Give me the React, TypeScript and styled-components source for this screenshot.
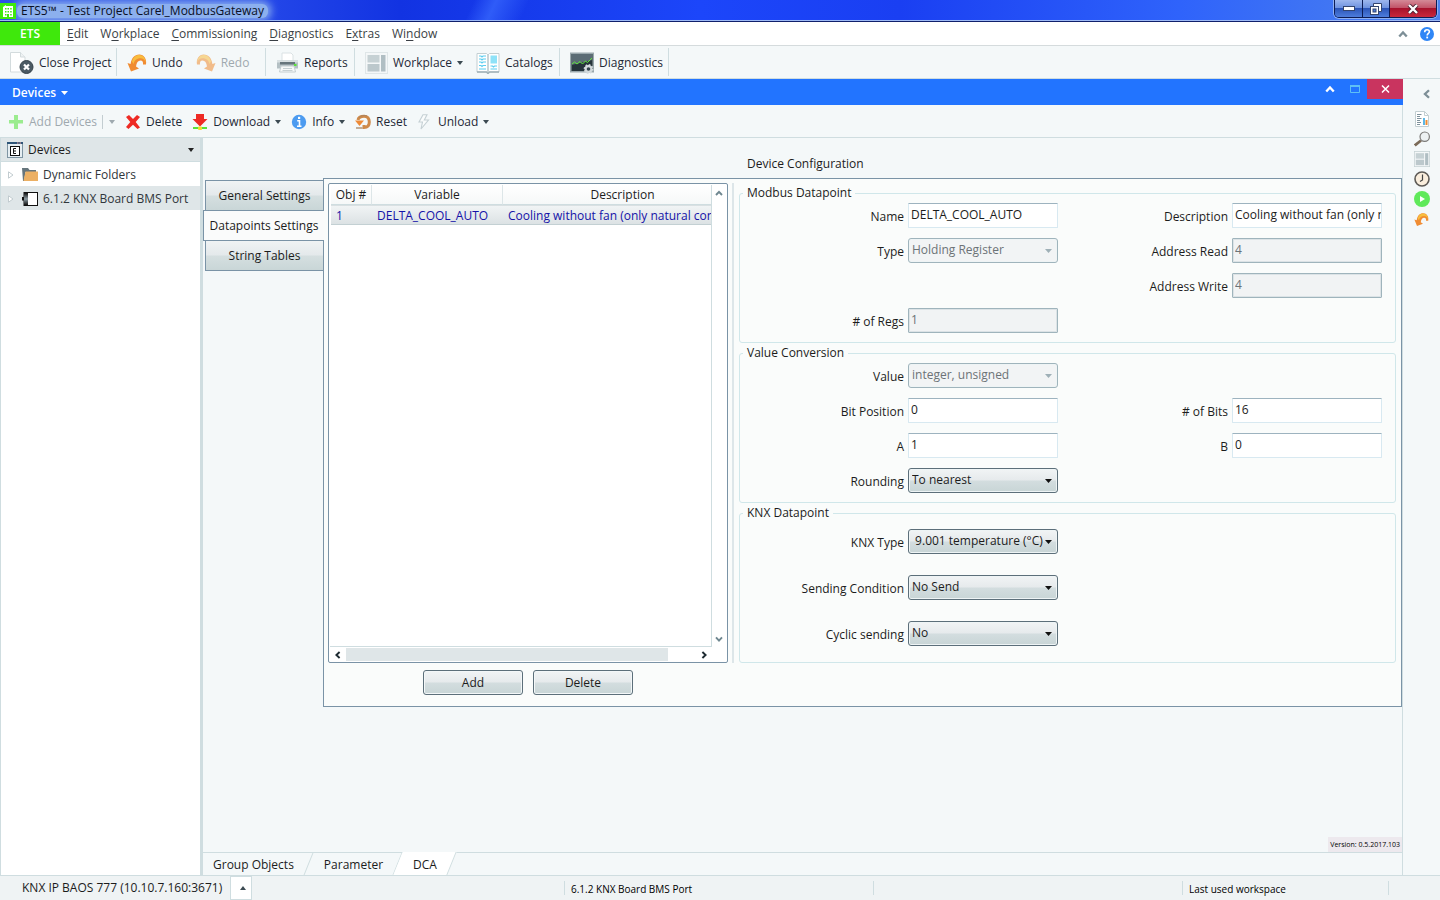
import React from "react";
import styled, { createGlobalStyle, css } from "styled-components";

const line = "#cfdde0";
const frame = "#7a93a6";

const GlobalStyle = createGlobalStyle`
  *, *::before, *::after { box-sizing: border-box; }
  body { margin: 0; background: #f4f8f9; }
  body, button, input, select, table {
    font-family: "Open Sans", "Noto Sans", sans-serif;
    font-size: 12px;
    line-height: 16px;
    color: #1c1c1c;
  }
  button { border: 0; background: none; padding: 0; margin: 0; }
  svg { display: block; flex: none; }
`;

const Page = styled.div`
  display: flex;
  flex-direction: column;
  min-height: 100vh;
`;

/* ---------- window title ---------- */

const TitleBar = styled.header`
  display: flex;
  align-items: center;
  height: 22px;
  padding-right: 3px;
  overflow: hidden;
  border-bottom: 1px solid #10206c;
  box-shadow: inset 0 -1px 0 #9db9f5;
  background:
    linear-gradient(115deg, transparent 430px, #2f5cf8 450px, transparent 480px),
    linear-gradient(90deg, #2c50e6 0, #2346e8 270px, #1233e2 400px, #1c46fa 700px, #1a3ff2 900px, #2f63fb 1180px, #4d83ee 100%);
`;

const AppMark = styled.span`
  position: relative;
  z-index: 1;
`;

const TitleText = styled.h1`
  margin: 0 0 0 1px;
  padding: 0 4px;
  font-size: 12px;
  line-height: 14px;
  font-weight: 400;
  color: #0a0f24;
  background: #8cb0ee;
  border-radius: 6px;
  box-shadow: 0 0 8px 3px #8cb0ee;
`;

const WindowButtons = styled.div`
  display: flex;
  align-self: flex-start;
  height: 18px;
  border: 1px solid #0c1c55;
  border-top: 0;
  border-radius: 0 0 5px 5px;
  overflow: hidden;
  box-shadow: 0 0 0 1px #8fb0f2;
`;

const WindowButton = styled.button<{ $close?: boolean }>`
  display: flex;
  align-items: center;
  justify-content: center;
  width: ${(p) => (p.$close ? 47 : 27)}px;
  border-left: 1px solid #0c1c55;
  background: ${(p) =>
    p.$close
      ? "linear-gradient(#d48a97 0, #c25468 45%, #a8122c 50%, #c8283c 100%)"
      : "linear-gradient(#9db7ee 0, #6f93e0 45%, #2c55b8 50%, #4d7ddc 100%)"};
  &:first-child { border-left: 0; }
`;

/* ---------- menu ---------- */

const MenuBar = styled.nav`
  display: flex;
  align-items: center;
  height: 24px;
  padding-right: 5px;
  background: #fff;
  border-bottom: 1px solid #d5dbdd;
`;

const EtsButton = styled.button`
  align-self: stretch;
  width: 60px;
  margin-right: 7px;
  background: #3fe80c;
  color: #fff;
  font-weight: 600;
`;

const MenuItem = styled.button`
  margin-right: 12px;
  color: #3a3f45;
  u { text-underline-offset: 2px; }
`;

const Spacer = styled.div`
  flex: 1;
`;

const IconButton = styled.button`
  display: flex;
  align-items: center;
  justify-content: center;
  width: 16px;
  height: 16px;
  margin-left: 8px;
`;

/* ---------- toolbars ---------- */

const MainToolbar = styled.div`
  display: flex;
  align-items: center;
  height: 33px;
  border-bottom: 1px solid ${line};
`;

const ToolGroup = styled.div<{ $width: number }>`
  display: flex;
  align-items: center;
  gap: 13px;
  min-width: ${(p) => p.$width}px;
  height: 28px;
  padding-left: 10px;
  border-right: 1px solid ${line};
`;

const ToolButton = styled.button<{ $faded?: boolean }>`
  display: flex;
  align-items: center;
  gap: 5px;
  padding-top: 1px;
  white-space: nowrap;
  color: ${(p) => (p.$faded ? "#9fa9af" : "#1f2937")};
`;

const PaneTitle = styled.div`
  display: flex;
  align-items: flex-start;
  height: 26px;
  padding-left: 12px;
  background: #2274ff;
`;

const PaneName = styled.button`
  display: flex;
  align-items: center;
  align-self: center;
  gap: 5px;
  padding-top: 1px;
  color: #fff;
  font-weight: 600;
`;

const PaneButton = styled.button<{ $close?: boolean }>`
  display: flex;
  align-items: center;
  justify-content: center;
  width: ${(p) => (p.$close ? 36 : 25)}px;
  height: 20px;
  background: ${(p) => (p.$close ? "#c9345f" : "none")};
`;

const DeviceToolbar = styled.div`
  display: flex;
  align-items: center;
  gap: 10px;
  height: 33px;
  padding-left: 8px;
  border-bottom: 1px solid ${line};
`;

const Split = styled.span`
  display: flex;
  align-items: center;
  height: 14px;
  padding-left: 6px;
  border-left: 1px solid #c3cdd1;
`;

/* ---------- frame of the work area ---------- */

const Body = styled.div`
  display: flex;
  flex: 1;
`;

const Workspace = styled.div`
  display: flex;
  flex: 1;
  flex-direction: column;
  min-width: 0;
`;

const WorkFrame = styled.div`
  display: flex;
  flex: 1;
  flex-direction: column;
  border-right: 1px solid ${line};
`;

const Columns = styled.div`
  display: flex;
  flex: 1;
`;

const Rail = styled.aside`
  display: flex;
  flex-direction: column;
  align-items: center;
  gap: 4px;
  width: 37px;
  padding-top: 7px;
`;

const RailButton = styled.button<{ $toggle?: boolean }>`
  display: flex;
  align-items: center;
  justify-content: center;
  width: 16px;
  height: 16px;
  ${(p) => p.$toggle && css`align-self: flex-end; margin: 0 5px 5px 0;`}
`;

/* ---------- device tree ---------- */

const Sidebar = styled.aside`
  flex: none;
  width: 203px;
  background: #fff;
  border-left: 1px solid ${line};
  border-right: 3px solid ${line};
`;

const TreeHeader = styled.div`
  display: flex;
  align-items: center;
  gap: 5px;
  height: 24px;
  padding: 1px 6px 0;
  background: #dfe6e8;
  border-bottom: 1px solid ${line};
`;

const Tree = styled.ul`
  margin: 0;
  padding: 0;
  list-style: none;
`;

const TreeItem = styled.li<{ $selected?: boolean }>`
  display: flex;
  align-items: center;
  height: 24px;
  padding: 1px 0 0 7px;
  gap: 5px;
  color: #30363b;
  background: ${(p) => (p.$selected ? "#dfe6e8" : "#fff")};
  svg:first-child { margin-right: 3px; }
`;

/* ---------- device configuration ---------- */

const Content = styled.main`
  display: flex;
  flex: 1;
  flex-direction: column;
  min-width: 0;
`;

const Config = styled.section`
  display: grid;
  grid-template-columns: 120px 415px 1fr;
  grid-template-rows: 40px auto;
`;

const ConfigTitle = styled.h2`
  grid-column: 3;
  align-self: center;
  margin: 0;
  padding: 12px 0 0 9px;
  font-size: 12px;
  font-weight: 400;
`;

const SideTabs = styled.div`
  display: flex;
  flex-direction: column;
  align-items: flex-end;
  padding-top: 2px;
`;

const SideTab = styled.button<{ $active?: boolean }>`
  width: 118px;
  height: 31px;
  margin-bottom: -1px;
  border: 1px solid ${frame};
  border-right: 0;
  background: linear-gradient(#f0f3f4 0, #e4e9eb 48%, #d5dfe0 52%, #c9d6d7 100%);
  ${(p) =>
    p.$active &&
    css`
      position: relative;
      width: 121px;
      margin-right: -1px;
      background: #fafbfb;
    `}
`;

const Panel = styled.div`
  display: grid;
  grid-column: 2 / 4;
  grid-template-columns: 400px 1fr;
  padding: 4px 5px 11px 4px;
  border: 1px solid ${frame};
  background: #fafcfb;
`;

const ListBox = styled.div`
  display: grid;
  grid-template-columns: 1fr 15px;
  grid-template-rows: 1fr 15px;
  padding: 1px 0 0 1px;
  border: 1px solid ${frame};
  border-radius: 2px;
  background: #fff;
`;

const ListView = styled.div`
  overflow: hidden;
  padding-left: 1px;
  border-right: 1px solid ${line};
  border-bottom: 1px solid ${line};
`;

const DataTable = styled.table`
  width: 412px;
  table-layout: fixed;
  border-collapse: separate;
  border-spacing: 0;
  th {
    height: 20px;
    padding: 0;
    font-weight: 400;
    border-right: 1px solid #dde6e8;
    border-bottom: 1px solid ${line};
    background: linear-gradient(#fff, #f6f8f8);
  }
  td {
    height: 20px;
    padding: 1px 5px 0;
    white-space: nowrap;
    color: #1512a8;
    border-top: 1px solid #d9e0e2;
    border-bottom: 1px solid #c3d0d3;
    background: linear-gradient(#f1f4f5, #dce2e4);
  }
`;

const VScroll = styled.div`
  display: flex;
  flex-direction: column;
  align-items: center;
  justify-content: space-between;
  padding: 4px 2px 4px 0;
`;

const HScroll = styled.div`
  display: flex;
  align-items: center;
  padding: 0 4px;
`;

const HTrack = styled.div`
  display: flex;
  flex: 1;
  margin: 0 4px;
  &::before { content: ""; width: 92%; height: 13px; background: #dfe6e8; }
`;

const ListActions = styled.div`
  display: flex;
  justify-content: center;
  gap: 10px;
  padding-top: 7px;
`;

const PushButton = styled.button`
  width: 100px;
  height: 25px;
  border: 1px solid #5c6f7a;
  border-radius: 3px;
  background: linear-gradient(#f1f4f5 0, #e6eaec 48%, #d3dddf 52%, #c8d5d6 100%);
  box-shadow: inset 0 0 0 1px #f3f7f8;
`;

const Forms = styled.form`
  display: flex;
  flex-direction: column;
  gap: 2px;
  margin-left: 4px;
  padding: 2px 0 0 5px;
  border-left: 2px solid #dde6e9;
`;

const Group = styled.fieldset<{ $loose?: boolean }>`
  display: grid;
  grid-template-columns: 164px 150px 1fr 150px;
  column-gap: 4px;
  row-gap: ${(p) => (p.$loose ? 21 : 10)}px;
  margin: 0;
  padding: ${(p) => (p.$loose ? "8px 13px 16px 0" : "2px 13px 9px 0")};
  min-width: 0;
  border: 1px solid #d0e7ea;
  border-radius: 3px;
`;

const Legend = styled.legend`
  height: 16px;
  margin-left: 3px;
  padding: 0 4px;
`;

const Label = styled.label<{ $col: number }>`
  grid-column: ${(p) => p.$col};
  padding-top: 6px;
  text-align: right;
`;

const FieldSlot = styled.div<{ $col: number }>`
  display: flex;
  grid-column: ${(p) => p.$col};
`;

const TextBox = styled.input`
  width: 150px;
  height: 25px;
  padding: 0 0 3px 2px;
  border: 1px solid #d8e9f1;
  border-top-color: #9db3bf;
  border-radius: 1px;
  background: #fff;
  &:disabled {
    color: #6c7377;
    border: 1px solid #9fb4bc;
    background: #f1f3f4;
    box-shadow: inset 0 0 0 1px #dce3e6;
  }
`;

const SelectWrap = styled.span`
  position: relative;
  height: 25px;
  svg { position: absolute; right: 6px; top: 11px; pointer-events: none; }
`;

const SelectBox = styled.select`
  appearance: none;
  width: 150px;
  height: 25px;
  padding: 0 13px 2px 3px;
  border: 1px solid #5c6f7a;
  border-radius: 3px;
  background: linear-gradient(#f1f4f5 0, #e6eaec 48%, #d3dddf 52%, #c8d5d6 100%);
  box-shadow: inset 0 0 0 1px #eef4f5;
  &:disabled {
    opacity: 1;
    color: #6c7377;
    border-color: #9fb4bc;
    background: #f2f4f5;
  }
`;

const Version = styled.p`
  align-self: flex-end;
  margin: auto 0 0;
  padding: 3px 2px 2px;
  font-size: 7px;
  line-height: 10px;
  color: #000;
  background: #ede9ee;
`;

/* ---------- bottom tabs and status ---------- */

const BottomTabs = styled.div`
  display: flex;
  height: 23px;
  border-top: 1px solid ${line};
  overflow-x: clip;
`;

const BottomTab = styled.button<{ $active?: boolean }>`
  position: relative;
  padding: 2px 15px 0;
  &:first-child { padding-left: 10px; }
  span { position: relative; }
  &::before {
    content: "";
    position: absolute;
    inset: ${(p) => (p.$active ? "-1px 0 0" : "0")};
    transform: skewX(-22deg);
    border-right: 1px solid ${line};
    background: ${(p) => (p.$active ? "#fff" : "none")};
  }
`;

const StatusBar = styled.footer`
  display: grid;
  grid-template-columns: 256px 309fr 309fr 309fr 206fr 51px;
  align-items: center;
  height: 25px;
  border-top: 1px solid ${line};
  background: #eff3f4;
`;

const StatusCell = styled.div`
  height: 14px;
  padding: 1px 0 0 6px;
  border-right: 1px solid ${line};
  font-size: 10px;
  line-height: 14px;
  color: #000;
  &:last-child { border-right: 0; }
`;

const Connection = styled.div`
  display: flex;
  align-items: center;
  justify-content: space-between;
  height: 24px;
  padding: 0 4px 0 22px;
`;

const DropUp = styled.button`
  display: flex;
  align-items: center;
  justify-content: center;
  width: 22px;
  height: 24px;
  border: 1px solid ${line};
  background: #fff;
  padding-left: 4px;
`;

/* ---------- drawings ---------- */

const Arrow = ({ color = "#3c4a52", up, width = 6 }: { color?: string; up?: boolean; width?: number }) => (
  <svg width={width} height="4" viewBox="0 0 7 4" preserveAspectRatio="none">
    <path d={up ? "M0 4h7L3.5 0z" : "M0 0h7L3.5 4z"} fill={color} />
  </svg>
);

const Chevron = ({ dir, color, size = 8 }: { dir: "up" | "down" | "left" | "right"; color: string; size?: number }) => {
  const d = { up: "M1 6l3-3.2L7 6", down: "M1 2.4l3 3.2 3-3.2", left: "M5.6 1L2.4 4l3.2 3", right: "M2.4 1l3.2 3-3.2 3" }[dir];
  return (
    <svg width={size} height={size} viewBox="0 0 8 8">
      <path d={d} fill="none" stroke={color} strokeWidth="1.9" />
    </svg>
  );
};

const AppIcon = () => (
  <svg width="16" height="16" viewBox="0 0 16 16">
    <rect width="16" height="16" fill="#3fe80c" />
    <path d="M3 14V4l3-2v1h7v11H9v-3H7v3z" fill="#fff" />
    <path d="M5 5h1.500v1.500H5zM7.500 5H9v1.500H7.500zM10.200 5h1.500v1.500h-1.500zM5 8h1.500v1.500H5zM7.500 8H9v1.500H7.500zM10.200 8h1.500v1.500h-1.500zM5 11h1.500v1.500H5zM10.200 11h1.500v1.500h-1.500z" fill="#3fe80c" />
  </svg>
);

const CloseProjectIcon = () => (
  <svg width="24" height="24" viewBox="0 0 24 24">
    <path d="M.5 1.500h10L15 6v15H.5z" fill="#fff" stroke="#d3dbdd" />
    <path d="M10.500 1.500V6H15" fill="#eef2f3" stroke="#d3dbdd" />
    <circle cx="16.500" cy="16" r="6.500" fill="#4b5a63" stroke="#35424a" />
    <path d="M14 13.500l5 5M19 13.500l-5 5" stroke="#fff" strokeWidth="2.200" />
  </svg>
);

const UndoIcon = ({ flip, faded, size = 20 }: { flip?: boolean; faded?: boolean; size?: number }) => (
  <svg width={size} height={size} viewBox="0 0 20 20" opacity={faded ? 0.55 : 1}>
    <g transform={flip ? "matrix(-1 0 0 1 20 0)" : undefined}>
      <path d="M0.500 10L4 18.500 12 15.500l-3-2C9.500 9.500 11 7.500 13.500 7.500c2 0 2.800 1.500 2.500 4h3C20 6 17 1.500 12.300 1.500 7.500 1.500 4.500 5 3.600 10.900z" fill="#f08c32" />
      <path d="M5 8.500C6 4.500 8.800 2 12.300 2c3.700 0 6.200 3 6.400 7.500C17.700 6.500 16 5.300 13.500 5.300 9.500 5.300 7.500 7.500 6.500 11z" fill="#f8bd3e" />
    </g>
  </svg>
);

const PrinterIcon = () => (
  <svg width="23" height="22" viewBox="0 0 23 22">
    <path d="M6 1h9l2 2v6H6z" fill="#fff" stroke="#dbe2e4" />
    <path d="M1 8.500h21v8H1z" fill="#b4c0c4" />
    <path d="M1 8.500h21v2H1z" fill="#d9e0e2" />
    <path d="M4 10h15v2.500H4z" fill="#66757c" />
    <path d="M5 14h13l1.500 6h-16z" fill="#f7f9f9" stroke="#c3cdd0" />
    <path d="M7 16.500h9M6.500 18.500h10" stroke="#c6d0d2" />
    <rect x="18" y="12" width="2.500" height="2" fill="#5ae23a" />
  </svg>
);

const WorkplaceIcon = ({ small }: { small?: boolean }) => (
  <svg width={small ? 16 : 23} height={small ? 16 : 22} viewBox="0 0 23 22" preserveAspectRatio="none">
    <rect x=".5" y=".5" width="22" height="21" fill="#f4f7f8" stroke={small ? "#c3cfd2" : "#dfe6e8"} />
    <rect x="2.500" y="3" width="12" height="7.500" fill="#c6d1d4" />
    <rect x="2.500" y="12" width="12" height="7.500" fill="#bcc8cc" />
    <rect x="16" y="3" width="4.500" height="16.500" fill="#b0bec3" />
  </svg>
);

const CatalogIcon = () => (
  <svg width="24" height="22" viewBox="0 0 24 22">
    <path d="M1 1.500h9.500L12 3l1.500-1.500H23V20h-9.500L12 21.500 10.500 20H1z" fill="#fff" stroke="#c3cfd2" />
    <path d="M1 20h9.500l1.500 1.500L13.500 20H23" fill="none" stroke="#9fb0b6" strokeWidth="1.500" />
    <path d="M12 3v17" stroke="#b7c6ca" strokeWidth="1.500" />
    <path d="M3 4h2l1 1 1-1h3M3 7h2l1 1 1-1h3M3 10h2l1 1 1-1h3M3 13.500h2l1 1 1-1h3M3 17h7M14.500 14h2l1 1 1-1H21M14.500 17H21" fill="none" stroke="#5ccdf0" strokeWidth="1.200" />
    <rect x="14.500" y="3.500" width="6.500" height="8" fill="#8ee2f8" />
  </svg>
);

const DiagnosticsIcon = () => (
  <svg width="24" height="22" viewBox="0 0 24 22">
    <rect x=".75" y="1.250" width="22.500" height="18.500" fill="#26343b" stroke="#9aa8ad" strokeWidth="1.500" />
    <path d="M1.500 2h21v6L1.500 13z" fill="#5b6c75" />
    <path d="M2 12l2.500-2 2.500 2 3-2.500 2.500 2.500 3-3 2 1.500L22 6" fill="none" stroke="#5fe83b" />
    <circle cx="18.500" cy="17" r="4" fill="#d3dadd" stroke="#d3dadd" strokeWidth="1.800" strokeDasharray="1.600 1.500" />
    <circle cx="18.500" cy="17" r="1.800" fill="#33434b" />
  </svg>
);

const PlusIcon = () => (
  <svg width="16" height="16" viewBox="0 0 16 16">
    <path d="M6 1h4v5h5v3.500h-5V15H6V9.500H1V6h5z" fill="#9bec8f" />
  </svg>
);

const CrossIcon = () => (
  <svg width="16" height="16" viewBox="0 0 16 16">
    <path d="M4 1l4 4 4-4 3 2-4.300 5L15 13.500 12.500 15 8 10.700 3.500 15 1 13l4.300-5L1 3z" fill="#ee2a24" />
  </svg>
);

const DownloadIcon = () => (
  <svg width="16" height="16" viewBox="0 0 16 16">
    <path d="M4 0h8v5h3.500L8 12.500.5 5H4z" fill="#ee2a24" />
    <path d="M1 14h14" stroke="#5ae23a" strokeWidth="2" />
    <rect x="6" y="12.500" width="4" height="3.500" rx="1" fill="#f2dc2c" />
  </svg>
);

const InfoIcon = () => (
  <svg width="16" height="16" viewBox="0 0 16 16">
    <circle cx="8" cy="8" r="7.200" fill="#4c9bf0" />
    <path d="M6.200 6.700h2.300V12M6 12.300h4.500" fill="none" stroke="#fff" strokeWidth="1.600" />
    <rect x="7" y="2.800" width="2.200" height="2.200" fill="#fff" />
  </svg>
);

const ResetIcon = () => (
  <svg width="16" height="16" viewBox="0 0 16 16">
    <path d="M3 6C3.500 3 6 2.200 9 2.200c3.500 0 5.300 2.300 5.300 5.800s-2 5.500-5.300 5.500V11" fill="none" stroke="#cf8a4a" strokeWidth="3" />
    <path d="M4 4C5.500 1.500 9 .8 12 2" fill="none" stroke="#a98563" />
    <path d="M0 6.500h9L4.500 12z" fill="#ee8a36" />
    <path d="M1 14h6.500" stroke="#a98563" strokeWidth="1.300" />
  </svg>
);

const BoltIcon = () => (
  <svg width="16" height="16" viewBox="0 0 16 16">
    <path d="M6 .8L2 8h3.500L4 15l7.500-9H7.300L10 .8z" fill="#fafcfc" stroke="#c5d0d4" strokeWidth="1.100" />
  </svg>
);

const DevicesIcon = () => (
  <svg width="16" height="16" viewBox="0 0 16 16">
    <rect x=".5" y=".5" width="15" height="15" fill="#e6eef2" stroke="#7f95a3" />
    <path d="M0 0h16v2H0z" fill="#2e5578" />
    <path d="M10 1h1.500M12.500 1H14" stroke="#e8a0a0" />
    <rect x="3.500" y="4.500" width="9" height="9" fill="#fff" stroke="#111" />
    <path d="M6.500 6.500v5M9 6.500h-2.500M9 11.500H6.500M6 9h3" stroke="#111" />
  </svg>
);

const FolderIcon = () => (
  <svg width="16" height="15" viewBox="0 0 16 15">
    <path d="M0 1h6l1.500 2H14v2H3.500L2 14H1z" fill="#66757c" />
    <path d="M3.500 4.500H16V14H1.500z" fill="#ecb064" />
  </svg>
);

const DeviceIcon = () => (
  <svg width="16" height="16" viewBox="0 0 16 16">
    <defs>
      <linearGradient id="device-shade" x1="0" y1="0" x2="0" y2="1">
        <stop offset="0" stopColor="#111" />
        <stop offset=".5" stopColor="#8b9aa1" />
        <stop offset="1" stopColor="#111" />
      </linearGradient>
    </defs>
    <path d="M0 6h2v3.500H0z" fill="#111" />
    <rect x="2" y="1.500" width="13.500" height="13" fill="#fff" stroke="#111" />
    <path d="M2 2h4v12H2z" fill="url(#device-shade)" />
  </svg>
);

const Expander = () => (
  <svg width="6" height="8" viewBox="0 0 6 8">
    <path d="M.5 .8v6.400L5 4z" fill="#fff" stroke="#c2ccd0" />
  </svg>
);

const HelpIcon = () => (
  <svg width="14" height="14" viewBox="0 0 14 14">
    <circle cx="7" cy="7" r="7" fill="#2f86f6" />
    <path d="M4.700 5.200C4.700 3.500 5.700 2.700 7 2.700s2.400.9 2.400 2.100C9.400 6.400 7.200 6.500 7.200 8.500" fill="none" stroke="#fff" strokeWidth="1.600" />
    <rect x="6.300" y="9.600" width="1.800" height="1.800" fill="#fff" />
  </svg>
);

const ReportIcon = () => (
  <svg width="14" height="16" viewBox="0 0 14 16">
    <path d="M.5.5h9l4 4v11H.5z" fill="#fff" stroke="#c3cfd2" />
    <path d="M9.500.5v4h4" fill="none" stroke="#c3cfd2" />
    <path d="M2 3.500h4.500M2 5.500h3M2 7.500h4.500M2 9.500h3M2 11.500h4M2 13.500h3" stroke="#7f929c" />
    <path d="M9 14V7" stroke="#5bb7e6" strokeWidth="2" />
    <path d="M11.500 14V9" stroke="#f08c32" strokeWidth="2" />
  </svg>
);

const SearchIcon = () => (
  <svg width="16" height="16" viewBox="0 0 16 16">
    <path d="M.8 14.500l6.200-5" stroke="#7b6a58" strokeWidth="2.800" />
    <circle cx="10.700" cy="5.700" r="4.700" fill="#edf1f2" stroke="#7b7a78" strokeWidth="1.200" />
  </svg>
);

const ClockIcon = () => (
  <svg width="16" height="16" viewBox="0 0 16 16">
    <circle cx="8" cy="8" r="7" fill="#faeedd" stroke="#5d5a56" strokeWidth="1.600" />
    <path d="M8.500 3.500V9L6 10.500" fill="none" stroke="#444" strokeWidth="1.200" />
  </svg>
);

const PlayIcon = () => (
  <svg width="16" height="16" viewBox="0 0 16 16">
    <circle cx="8" cy="8" r="8" fill="#5fe95a" />
    <path d="M6 5v6l5-3z" fill="#fff" />
  </svg>
);

/* ---------- form parts ---------- */

type FieldProps = { id: string; label: string; value: string; disabled?: boolean; right?: boolean };

const TextField = ({ id, label, value, disabled, right }: FieldProps) => (
  <>
    <Label htmlFor={id} $col={right ? 3 : 1}>{label}</Label>
    <FieldSlot $col={right ? 4 : 2}>
      <TextBox id={id} type="text" defaultValue={value} disabled={disabled} />
    </FieldSlot>
  </>
);

const SelectField = ({ id, label, value, disabled }: FieldProps) => (
  <>
    <Label htmlFor={id} $col={1}>{label}</Label>
    <FieldSlot $col={2}>
      <SelectWrap>
        <SelectBox id={id} disabled={disabled}>
          <option>{value}</option>
        </SelectBox>
        <Arrow color={disabled ? "#9fb0b7" : "#111"} width={7} />
      </SelectWrap>
    </FieldSlot>
  </>
);

export default function App() {
  return (
    <Page>
      <GlobalStyle />
      <TitleBar>
        <AppMark><AppIcon /></AppMark>
        <TitleText>ETS5™ - Test Project Carel_ModbusGateway</TitleText>
        <Spacer />
        <WindowButtons>
          <WindowButton aria-label="Minimize window">
            <svg width="12" height="5" viewBox="0 0 12 5"><rect x=".5" y=".5" width="11" height="4" fill="#fff" stroke="#33456f" /></svg>
          </WindowButton>
          <WindowButton aria-label="Restore window">
            <svg width="12" height="12" viewBox="0 0 12 12">
              <path d="M3.500 3V.5h8v8H9" fill="#fff" stroke="#33456f" />
              <rect x=".5" y="3.500" width="8" height="8" fill="#fff" stroke="#33456f" />
              <rect x="3" y="6" width="3" height="3" fill="#4d7ddc" stroke="#33456f" />
            </svg>
          </WindowButton>
          <WindowButton aria-label="Close window" $close>
            <svg width="12" height="10" viewBox="0 0 12 10">
              <path d="M2 1l8 8M10 1L2 9" stroke="#4a2030" strokeWidth="4" />
              <path d="M2 1l8 8M10 1L2 9" stroke="#fff" strokeWidth="2.400" />
            </svg>
          </WindowButton>
        </WindowButtons>
      </TitleBar>

      <MenuBar>
        <EtsButton>ETS</EtsButton>
        <MenuItem><u>E</u>dit</MenuItem>
        <MenuItem>W<u>o</u>rkplace</MenuItem>
        <MenuItem><u>C</u>ommissioning</MenuItem>
        <MenuItem><u>D</u>iagnostics</MenuItem>
        <MenuItem>E<u>x</u>tras</MenuItem>
        <MenuItem>Wi<u>n</u>dow</MenuItem>
        <Spacer />
        <IconButton aria-label="Collapse ribbon"><Chevron dir="up" color="#7d8f97" size={10} /></IconButton>
        <IconButton aria-label="Help"><HelpIcon /></IconButton>
      </MenuBar>

      <MainToolbar>
        <ToolGroup $width={117}>
          <ToolButton><CloseProjectIcon />Close Project</ToolButton>
        </ToolGroup>
        <ToolGroup $width={149}>
          <ToolButton><UndoIcon />Undo</ToolButton>
          <ToolButton $faded><UndoIcon flip faded />Redo</ToolButton>
        </ToolGroup>
        <ToolGroup $width={89}>
          <ToolButton><PrinterIcon />Reports</ToolButton>
        </ToolGroup>
        <ToolGroup $width={205}>
          <ToolButton><WorkplaceIcon />Workplace<Arrow /></ToolButton>
          <ToolButton><CatalogIcon />Catalogs</ToolButton>
        </ToolGroup>
        <ToolGroup $width={109}>
          <ToolButton><DiagnosticsIcon />Diagnostics</ToolButton>
        </ToolGroup>
      </MainToolbar>

      <Body>
        <Workspace>
          <PaneTitle>
            <PaneName>Devices<Arrow color="#fff" width={7} /></PaneName>
            <Spacer />
            <PaneButton aria-label="Collapse pane"><Chevron dir="up" color="#fff" size={10} /></PaneButton>
            <PaneButton aria-label="Maximize pane">
              <svg width="10" height="8" viewBox="0 0 10 8"><path d="M.5 1v6.500h9V1" fill="none" stroke="#5ec0f5" /><path d="M0 1h10" stroke="#5ec0f5" strokeWidth="2" /></svg>
            </PaneButton>
            <PaneButton aria-label="Close pane" $close>
              <svg width="9" height="8" viewBox="0 0 9 8"><path d="M1 .5l7 7M8 .5l-7 7" stroke="#fff" strokeWidth="1.500" /></svg>
            </PaneButton>
          </PaneTitle>

          <WorkFrame>
            <DeviceToolbar>
              <ToolButton $faded><PlusIcon />Add Devices<Split><Arrow color="#9fa9af" /></Split></ToolButton>
              <ToolButton><CrossIcon />Delete</ToolButton>
              <ToolButton><DownloadIcon />Download<Arrow /></ToolButton>
              <ToolButton><InfoIcon />Info<Arrow /></ToolButton>
              <ToolButton><ResetIcon />Reset</ToolButton>
              <ToolButton><BoltIcon />Unload<Arrow /></ToolButton>
            </DeviceToolbar>

            <Columns>
              <Sidebar>
                <TreeHeader>
                  <DevicesIcon />Devices<Spacer /><Arrow color="#222" />
                </TreeHeader>
                <Tree>
                  <TreeItem><Expander /><FolderIcon />Dynamic Folders</TreeItem>
                  <TreeItem $selected><Expander /><DeviceIcon />6.1.2 KNX Board BMS Port</TreeItem>
                </Tree>
              </Sidebar>

              <Content>
                <Config>
                  <ConfigTitle>Device Configuration</ConfigTitle>
                  <SideTabs>
                    <SideTab>General Settings</SideTab>
                    <SideTab $active>Datapoints Settings</SideTab>
                    <SideTab>String Tables</SideTab>
                  </SideTabs>
                  <Panel>
                    <ListBox>
                      <ListView>
                        <DataTable>
                          <colgroup>
                            <col style={{ width: 41 }} />
                            <col style={{ width: 131 }} />
                            <col />
                          </colgroup>
                          <thead>
                            <tr><th>Obj #</th><th>Variable</th><th>Description</th></tr>
                          </thead>
                          <tbody>
                            <tr><td>1</td><td>DELTA_COOL_AUTO</td><td>Cooling without fan (only natural conv</td></tr>
                          </tbody>
                        </DataTable>
                      </ListView>
                      <VScroll>
                        <Chevron dir="up" color="#6f8790" />
                        <Chevron dir="down" color="#6f8790" />
                      </VScroll>
                      <HScroll>
                        <Chevron dir="left" color="#1d2a31" />
                        <HTrack />
                        <Chevron dir="right" color="#1d2a31" />
                      </HScroll>
                    </ListBox>
                    <Forms>
                      <Group>
                        <Legend>Modbus Datapoint</Legend>
                        <TextField id="name" label="Name" value="DELTA_COOL_AUTO" />
                        <TextField id="description" label="Description" value="Cooling without fan (only n" right />
                        <SelectField id="type" label="Type" value="Holding Register" disabled />
                        <TextField id="address-read" label="Address Read" value="4" disabled right />
                        <TextField id="address-write" label="Address Write" value="4" disabled right />
                        <TextField id="regs" label="# of Regs" value="1" disabled />
                      </Group>
                      <Group>
                        <Legend>Value Conversion</Legend>
                        <SelectField id="value" label="Value" value="integer, unsigned" disabled />
                        <TextField id="bit-position" label="Bit Position" value="0" />
                        <TextField id="bits" label="# of Bits" value="16" right />
                        <TextField id="a" label="A" value="1" />
                        <TextField id="b" label="B" value="0" right />
                        <SelectField id="rounding" label="Rounding" value="To nearest" />
                      </Group>
                      <Group $loose>
                        <Legend>KNX Datapoint</Legend>
                        <SelectField id="knx-type" label="KNX Type" value={"\u00a09.001 temperature (°C)"} />
                        <SelectField id="sending" label="Sending Condition" value="No Send" />
                        <SelectField id="cyclic" label="Cyclic sending" value="No" />
                      </Group>
                    </Forms>
                    <ListActions>
                      <PushButton>Add</PushButton>
                      <PushButton>Delete</PushButton>
                    </ListActions>
                  </Panel>
                </Config>
                <Version>Version: 0.5.2017.103</Version>
                <BottomTabs>
                  <BottomTab><span>Group Objects</span></BottomTab>
                  <BottomTab><span>Parameter</span></BottomTab>
                  <BottomTab $active><span>DCA</span></BottomTab>
                </BottomTabs>
              </Content>
            </Columns>
          </WorkFrame>
        </Workspace>

        <Rail>
          <RailButton $toggle aria-label="Expand sidebar"><Chevron dir="left" color="#7d8f97" size={10} /></RailButton>
          <RailButton aria-label="Reports"><ReportIcon /></RailButton>
          <RailButton aria-label="Find"><SearchIcon /></RailButton>
          <RailButton aria-label="Workspaces"><WorkplaceIcon small /></RailButton>
          <RailButton aria-label="History"><ClockIcon /></RailButton>
          <RailButton aria-label="Run"><PlayIcon /></RailButton>
          <RailButton aria-label="Undo list"><UndoIcon size={15} /></RailButton>
        </Rail>
      </Body>

      <StatusBar>
        <Connection>
          KNX IP BAOS 777 (10.10.7.160:3671)
          <DropUp aria-label="Choose interface"><Arrow up /></DropUp>
        </Connection>
        <StatusCell />
        <StatusCell>6.1.2 KNX Board BMS Port</StatusCell>
        <StatusCell />
        <StatusCell>Last used workspace</StatusCell>
        <StatusCell />
      </StatusBar>
    </Page>
  );
}
